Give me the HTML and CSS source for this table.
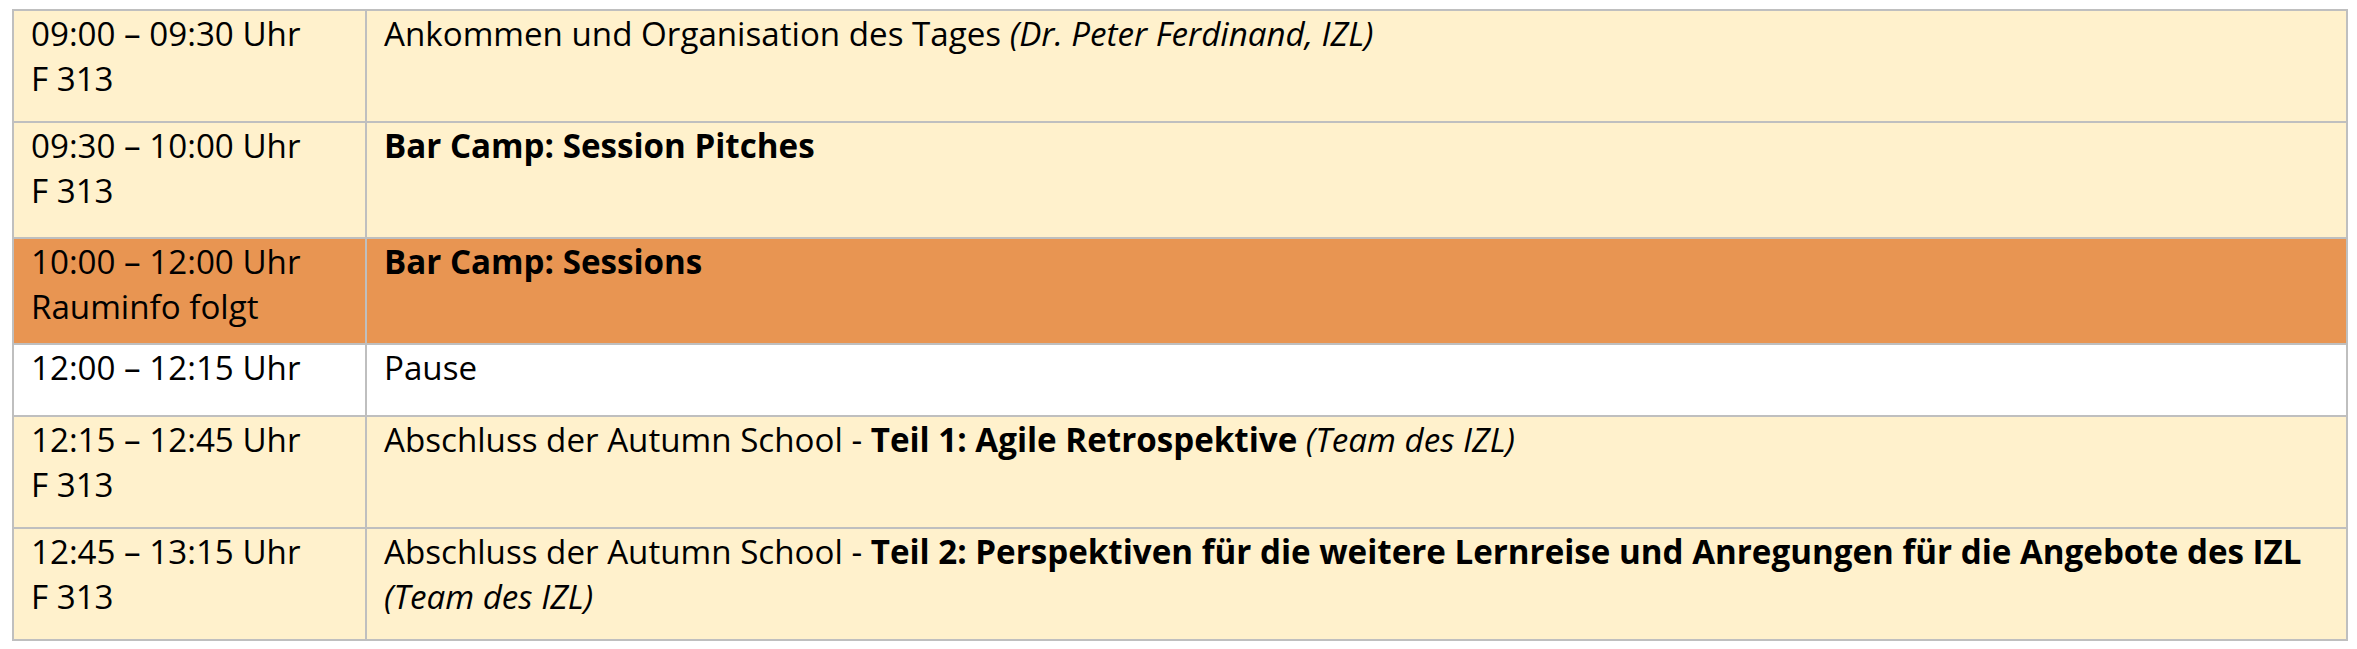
FILE: index.html
```html
<!DOCTYPE html>
<html lang="de">
<head>
<meta charset="utf-8">
<title>Programm</title>
<link rel="stylesheet" href="styles.css">
</head>
<body>
<table class="agenda">
  <colgroup>
    <col class="col-time">
    <col class="col-desc">
  </colgroup>
  <tbody>
    <tr class="row row-yellow">
      <td>09:00 – 09:30 Uhr<br>F 313</td>
      <td>Ankommen und Organisation des Tages <em>(Dr. Peter Ferdinand, IZL)</em></td>
    </tr>
    <tr class="row row-yellow row-tall">
      <td>09:30 – 10:00 Uhr<br>F 313</td>
      <td><strong>Bar Camp: Session Pitches</strong></td>
    </tr>
    <tr class="row row-orange row-short">
      <td>10:00 – 12:00 Uhr<br>Rauminfo folgt</td>
      <td><strong>Bar Camp: Sessions</strong></td>
    </tr>
    <tr class="row row-white row-single">
      <td>12:00 – 12:15 Uhr</td>
      <td>Pause</td>
    </tr>
    <tr class="row row-yellow">
      <td>12:15 – 12:45 Uhr<br>F 313</td>
      <td>Abschluss der Autumn School - <strong>Teil 1: Agile Retrospektive</strong> <em>(Team des IZL)</em></td>
    </tr>
    <tr class="row row-yellow">
      <td>12:45 – 13:15 Uhr<br>F 313</td>
      <td>Abschluss der Autumn School - <strong>Teil 2: Perspektiven für die weitere Lernreise und Anregungen für die Angebote des IZL</strong> <em>(Team des IZL)</em></td>
    </tr>
  </tbody>
</table>
</body>
</html>
```

FILE: styles.css
```css
html, body {
  margin: 0;
  padding: 0;
  background: #ffffff;
}

body {
  font-family: "Open Sans", "Liberation Sans", sans-serif;
  font-size: 33.15px;
  line-height: 45px;
  color: #000000;
}

.agenda {
  border-collapse: collapse;
  width: 2336px;
  margin: 9px 0 0 12px;
  table-layout: fixed;
}

.col-time {
  width: 353px;
}

.agenda td {
  border: 2px solid #bfbfbf;
  padding: 0 17px 20px 17px;
  vertical-align: top;
}

.row-tall td {
  padding-bottom: 24px;
}

.row-short td {
  padding-bottom: 14px;
}

.row-single td {
  padding-bottom: 25px;
}

.row-yellow td {
  background: #fff1cc;
}

.row-orange td {
  background: #e89552;
}

.row-white td {
  background: #ffffff;
}

.agenda strong {
  font-weight: 700;
}

.agenda em {
  font-style: italic;
}
```
